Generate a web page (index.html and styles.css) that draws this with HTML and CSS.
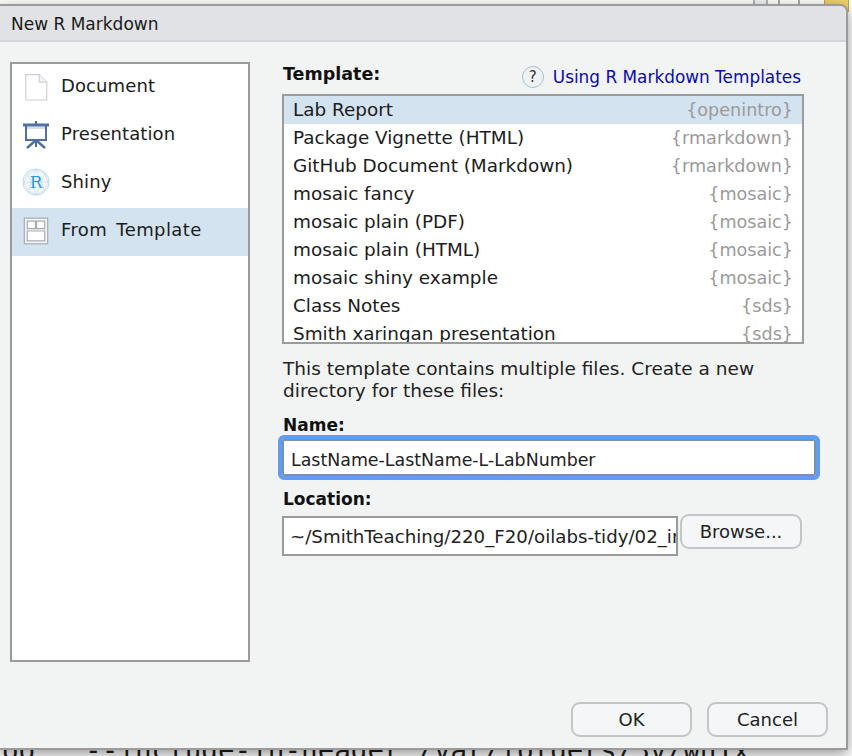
FILE: index.html
```html
<!DOCTYPE html>
<html lang="en">
<head>
<meta charset="utf-8">
<title>New R Markdown</title>
<link rel="stylesheet" href="styles.css">
</head>
<body>
<div class="backdrop-top"><i class="bt a"></i><i class="bt b"></i><i class="bt c"></i><i class="bt note"></i></div>
<div class="backdrop-code">oo   --include-in-header /var/folders/3v/wn1x</div>
<div class="dialog">
  <header class="titlebar">New R Markdown</header>
  <div class="body">
    <aside class="sidebar">
      <div class="side-item">
        <svg class="ic" viewBox="0 0 24 26"><path d="M2.5 1.5H15L22 8.5V25H2.5Z" fill="#fff" stroke="#c9ced3"/><path d="M15 1.5V8.5H22" fill="#f1f3f4" stroke="#c9ced3"/></svg>
        <span>Document</span>
      </div>
      <div class="side-item">
        <svg class="ic" viewBox="0 0 26 28"><g fill="none" stroke="#4e6f9f" stroke-width="2"><path d="M3 4V19H23V4"/><path d="M13 19V26"/><path d="M12 20L4 27M14 20L22 27" stroke-width="2.4"/></g><rect x="0" y="2.5" width="26" height="3" fill="#4e6f9f"/><rect x="12" y="0" width="2" height="3" fill="#4e6f9f"/><rect x="4" y="6" width="18" height="2" fill="#d8dde4"/></svg>
        <span>Presentation</span>
      </div>
      <div class="side-item">
        <svg class="ic ic-shiny" viewBox="0 0 30 30"><circle cx="15" cy="15" r="14" fill="#f4f9fc" stroke="#b9d6ea"/><g fill="none" stroke="#c4dcec" stroke-width=".8"><path d="M15 1.5L6 7L2 16L7 25L15 28.5L24 24L28 15L24 6Z"/><path d="M6 7L10 15L7 25M24 6L21 15L24 24M15 1.5L10 15L15 28.5L21 15Z M2 16L10 15H21L28 15"/></g><text x="15" y="21" class="r-mark">R</text></svg>
        <span>Shiny</span>
      </div>
      <div class="side-item active">
        <svg class="ic" viewBox="0 0 22 24"><rect x="1" y="1" width="20" height="22" fill="#f5f6f7" stroke="#a6abb0"/><path d="M3.5 3.5H10.5V10H3.5ZM11.5 3.5H18.5V10H11.5ZM3.5 12H18.5V20.5H3.5Z" fill="#fff" stroke="#a6abb0"/></svg>
        <span class="wide">From Template</span>
      </div>
    </aside>
    <main class="main">
      <div class="template-head">
        <strong>Template:</strong>
        <a class="help"><span class="q">?</span><span class="help-text">Using R Markdown Templates</span></a>
      </div>
      <div class="tlist">
        <div class="row sel"><span>Lab Report</span><em>{openintro}</em></div>
        <div class="row"><span>Package Vignette (HTML)</span><em>{rmarkdown}</em></div>
        <div class="row"><span>GitHub Document (Markdown)</span><em>{rmarkdown}</em></div>
        <div class="row"><span>mosaic fancy</span><em>{mosaic}</em></div>
        <div class="row"><span>mosaic plain (PDF)</span><em>{mosaic}</em></div>
        <div class="row"><span>mosaic plain (HTML)</span><em>{mosaic}</em></div>
        <div class="row"><span>mosaic shiny example</span><em>{mosaic}</em></div>
        <div class="row"><span>Class Notes</span><em>{sds}</em></div>
        <div class="row"><span>Smith xaringan presentation</span><em>{sds}</em></div>
      </div>
      <p class="note-text">This template contains multiple files. Create a new directory for these files:</p>
      <label class="lbl lbl-name">Name:</label>
      <div class="name-field">LastName-LastName-L-LabNumber</div>
      <label class="lbl lbl-loc">Location:</label>
      <div class="loc-row">
        <div class="loc-field">~/SmithTeaching/220_F20/oilabs-tidy/02_intro_to_data</div>
        <button class="btn browse">Browse...</button>
      </div>
    </main>
  </div>
  <footer class="actions">
    <button class="btn act">OK</button>
    <button class="btn act">Cancel</button>
  </footer>
</div>
</body>
</html>
```
FILE: styles.css
```css
html, body { margin: 0; padding: 0; }
body {
  width: 852px; height: 756px; overflow: hidden; position: relative;
  background: #fff;
  font-family: "DejaVu Sans", sans-serif;
  color: #1c1c1c;
}
.backdrop-top { position: absolute; top: 0; right: 0; width: 100px; height: 12px; }
.bt { position: absolute; top: 0; height: 6px; display: block; }
.bt.a { left: 1px; width: 11px; background: #f1f2f5; border-left: 2px solid #b5b5b5; border-right: 2px solid #b5b5b5; }
.bt.b { left: 26px; width: 2px; background: #aaa; }
.bt.c { left: 46px; width: 2px; background: #aaa; }
.bt.note { left: 72px; width: 23px; height: 11px; background: #f2d26c; border: 1px solid #c9a436; border-top: 0; }
.backdrop-code {
  position: absolute; left: 2px; top: 735px; white-space: pre;
  font: 27.6px/32px "DejaVu Sans Mono", monospace; color: #1c1c1c;
}
.dialog {
  position: absolute; left: -2px; top: 4px; width: 850px; height: 746px;
  box-sizing: border-box;
  background: #f2f4f4;
  border: 2px solid #9b9b9b; border-top-right-radius: 8px;
  box-shadow: 0 4px 14px rgba(0,0,0,.42);
  display: flex; flex-direction: column;
}
.titlebar {
  height: 36px; box-sizing: border-box; flex: none;
  background: #e0e2e6; border-bottom: 2px solid #d3d5d8; border-top-right-radius: 6px;
  padding-left: 11px;
  font-size: 17px; line-height: 36px; color: #1a1a1a;
}
.body { display: flex; flex: 1; padding: 20px 0 0 10px; min-height: 0; }
.sidebar {
  width: 240px; height: 600px; box-sizing: border-box; flex: none;
  background: #fff; border: 2px solid #9b9b9b;
}
.side-item { height: 48px; display: flex; align-items: center; padding-left: 11px; font-size: 18px; letter-spacing: .1px; }
.side-item span { margin-bottom: 6px; }
.side-item .wide { word-spacing: 3px; letter-spacing: .4px; }
.side-item.active { background: #d4e3f0; }
.ic { width: 26px; height: 28px; margin-right: 12px; margin-bottom: 3px; flex: none; }
.ic-shiny { width: 28px; height: 28px; margin-left: -1px; margin-right: 11px; margin-bottom: 4px; }
.r-mark { font: 18px "DejaVu Serif", serif; fill: #2a9ad6; text-anchor: middle; }
.main { margin-left: 32px; width: 522px; flex: none; }
.template-head { display: flex; justify-content: space-between; align-items: center; height: 32px; }
.template-head strong { font-size: 17.5px; color: #111; margin-bottom: 8px; margin-left: 1px; }
.help { display: flex; align-items: center; margin-right: 3px; margin-top: -2px; }
.q {
  width: 22px; height: 22px; border-radius: 50%; box-sizing: border-box;
  border: 1px solid #a9bfcd; background: #eef2f4; margin-right: 9px;
  font-size: 15px; line-height: 20px; text-align: center; color: #333;
}
.help-text { color: #0b0bb0; font-size: 16.9px; }
.tlist {
  height: 250px; box-sizing: border-box; overflow: hidden;
  background: #fff; border: 2px solid #9b9b9b;
}
.row { height: 28px; display: flex; justify-content: space-between; align-items: center; padding: 0 9px; font-size: 18.4px; }
.row span { margin-bottom: 2px; }
.row em { font-style: normal; color: #9a9a9a; font-size: 17.6px; }
.row.sel { background: #d4e3f0; }
.note-text { margin: 14px 0 0 1px; font-size: 18.5px; line-height: 22px; width: 500px; color: #222; }
.lbl { display: block; font-size: 17px; font-weight: 700; color: #111; line-height: 24px; margin: 11px 0 0 1px; }
.name-field {
  width: 534px; height: 37px; box-sizing: border-box; margin-top: 2px;
  background: #fff; border: 2px solid #7a90ab; outline: 4px solid #629cee; border-radius: 2px;
  padding-left: 7px; font-size: 17.4px; line-height: 38px; color: #222;
}
.loc-row { display: flex; align-items: flex-start; margin-top: 5px; }
.loc-field {
  width: 396px; height: 40px; box-sizing: border-box; flex: none; overflow: hidden; white-space: nowrap;
  background: #fff; border: 2px solid #9b9b9b; padding-left: 6px;
  font-size: 18.2px; line-height: 38px; color: #222;
}
.btn {
  font-family: inherit; background: #f5f6f8; border: 2px solid #c3c5c7; border-radius: 9px;
  color: #222; padding: 0; box-sizing: border-box;
}
.browse { width: 122px; height: 35px; margin-left: 2px; margin-top: -2px; font-size: 18px; }
.actions { display: flex; justify-content: flex-end; gap: 15px; padding-right: 18px; padding-bottom: 11px; flex: none; }
.act { width: 121px; height: 35px; font-size: 18px; }
```
